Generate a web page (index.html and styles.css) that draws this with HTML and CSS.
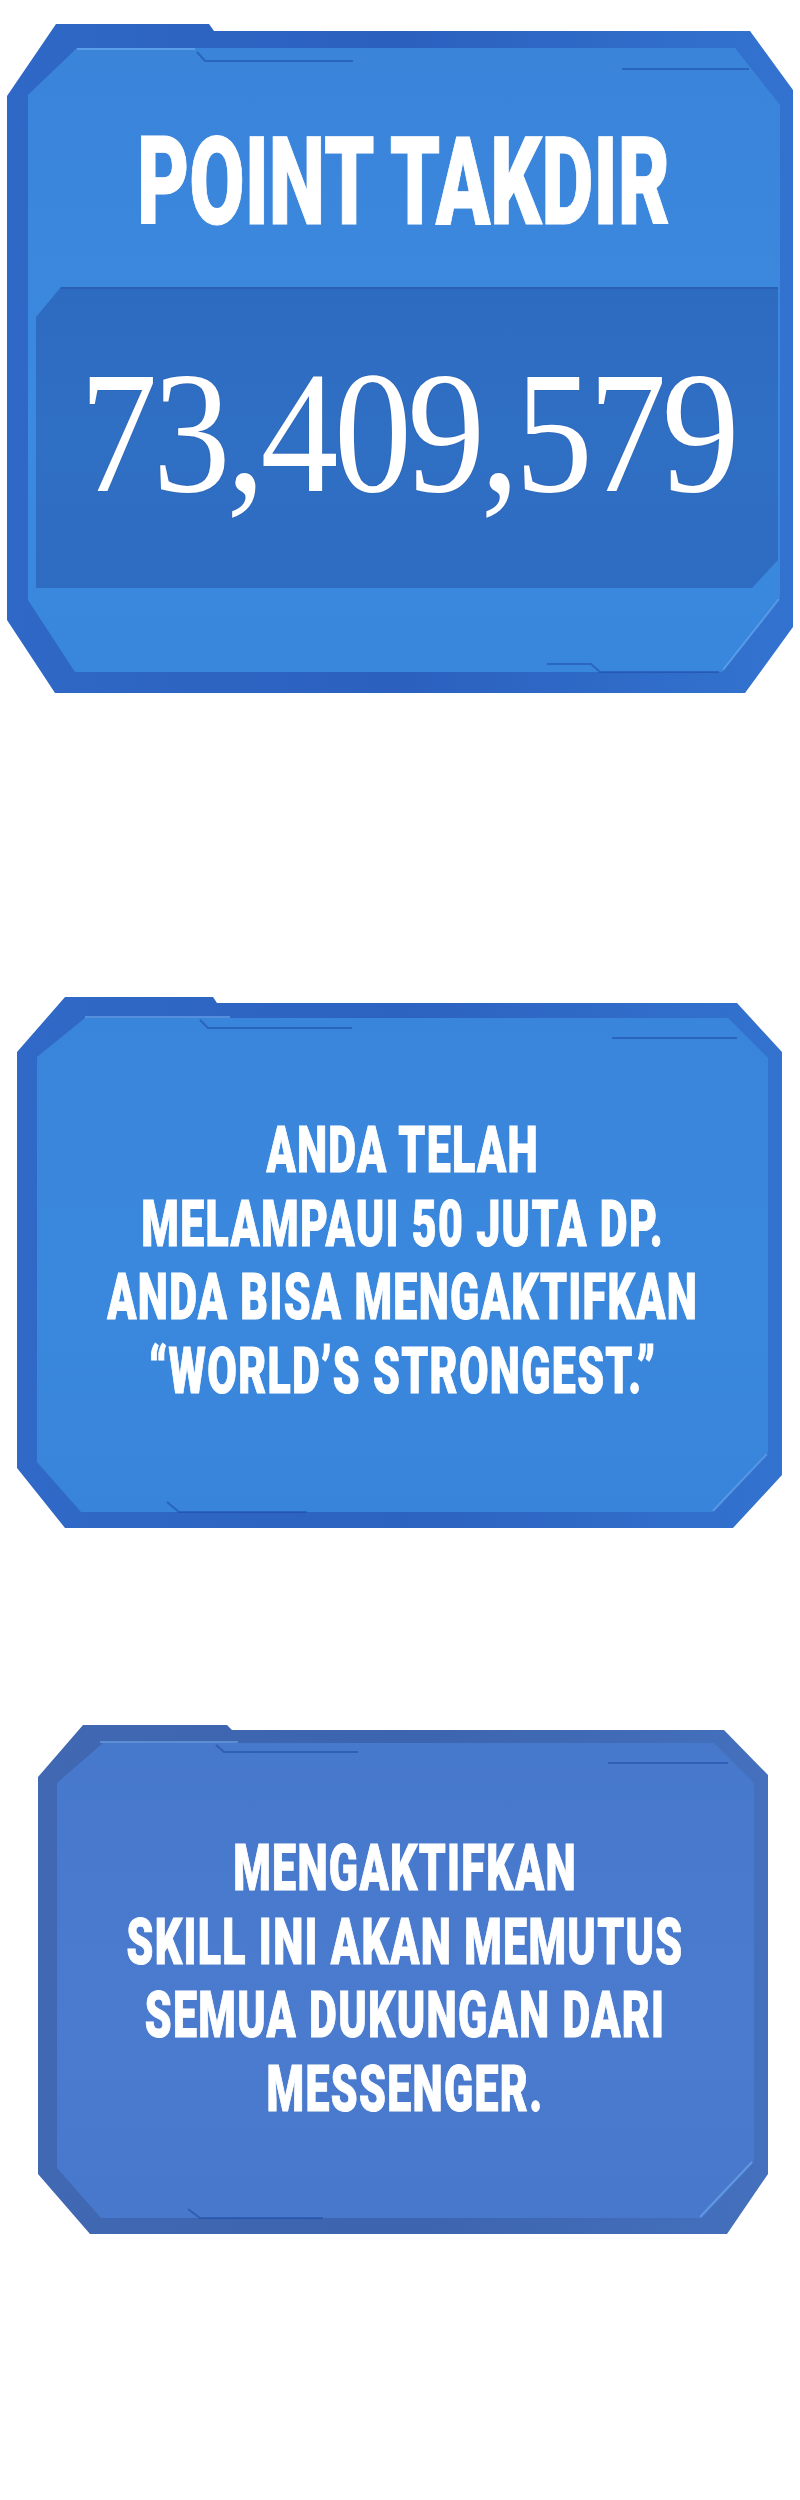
FILE: index.html
```html
<!DOCTYPE html>
<html>
  <head>
    <title>Point Takdir</title>

    <link rel="stylesheet" href="styles.css">
  </head>
  <body>
    <div class="strip">
      <div class="panel panel-points">
        <div class="panel-face face-points">
          <p class="points-title">POINT TAKDIR</p>
          <div class="points-box">
            <p class="points-value">73,409,579</p>
          </div>
        </div>
        <svg class="panel-trim" viewBox="0 0 786 669" preserveAspectRatio="none">
          <polyline class="trim-light" points="70,25 188,25"/>
          <polyline class="trim-dark" points="190,28 198,37 346,37"/>
          <polyline class="trim-dark" points="615,45 742,45"/>
          <polyline class="trim-dark" points="540,640 584,640 593,648 712,648"/>
          <polyline class="trim-light" points="772,575 716,646"/>
        </svg>
      </div>

      <div class="panel panel-notice">
        <div class="panel-face face-notice">
          <p class="message">
            ANDA TELAH<br>
            MELAMPAUI 50 JUTA DP.<br>
            ANDA BISA MENGAKTIFKAN<br>
            “WORLD’S STRONGEST.”
          </p>
        </div>
        <svg class="panel-trim" viewBox="0 0 765 531" preserveAspectRatio="none">
          <polyline class="trim-light" points="68,20 213,20"/>
          <polyline class="trim-dark" points="183,23 191,31 335,31"/>
          <polyline class="trim-dark" points="595,41 720,41"/>
          <polyline class="trim-dark" points="150,505 162,515 290,515"/>
          <polyline class="trim-light" points="750,457 696,514"/>
        </svg>
      </div>

      <div class="panel panel-warning">
        <div class="panel-face face-warning">
          <p class="message message-warning">
            MENGAKTIFKAN<br>
            SKILL INI AKAN MEMUTUS<br>
            SEMUA DUKUNGAN DARI<br>
            MESSENGER.
          </p>
        </div>
        <svg class="panel-trim" viewBox="0 0 730 509" preserveAspectRatio="none">
          <polyline class="trim-light" points="62,17 200,17"/>
          <polyline class="trim-dark" points="178,20 186,27 320,27"/>
          <polyline class="trim-dark" points="570,38 690,38"/>
          <polyline class="trim-dark" points="150,484 162,493 285,493"/>
          <polyline class="trim-light" points="714,437 662,492"/>
        </svg>
      </div>
    </div>
  </body>
</html>
```

FILE: styles.css
```css
body {
  margin: 0;
  background-color: white;
  font-family: Roboto, "Liberation Sans", sans-serif;
}

.strip {
  display: flex;
  flex-direction: column;
  align-items: flex-start;
  padding-bottom: 266px;
}

.panel {
  position: relative;
  display: flex;
  box-sizing: border-box;
}

.panel-face {
  flex: 1;
  min-width: 0;
  display: flex;
  flex-direction: column;
  align-items: center;
}

.panel-trim {
  position: absolute;
  top: 0;
  left: 0;
  width: 100%;
  height: 100%;
  pointer-events: none;
}

.trim-light {
  fill: none;
  stroke: rgba(130, 190, 250, 0.45);
  stroke-width: 2;
}

.trim-dark {
  fill: none;
  stroke: rgba(25, 70, 160, 0.5);
  stroke-width: 2;
}

/* panel 1 */

.panel-points {
  margin: 24px 0 0 7px;
  width: 786px;
  height: 669px;
  padding: 24px 13px 21px 21px;
  background: linear-gradient(90deg, #2f68c6, #2b60bf 50%, #3373cf);
  clip-path: polygon(0 72px, 49px 0, 202px 0, 207px 7px, calc(100% - 43px) 7px, 100% 66px,
    100% calc(100% - 66px), calc(100% - 48px) 100%, 48px 100%, 0 calc(100% - 73px));
}

.face-points {
  background: linear-gradient(180deg, #3a84da, #3b8adf 60%, #3987dd);
  clip-path: polygon(0 47px, 49px 0, calc(100% - 45px) 0, 100% 57px,
    100% calc(100% - 75px), calc(100% - 58px) 100%, 47px 100%, 0 calc(100% - 72px));
}

.points-title {
  margin: 74px 0 0;
  font-size: 122px;
  line-height: 1;
  font-weight: 900;
  color: white;
  white-space: nowrap;
  -webkit-text-stroke: 1px white;
  transform: scaleX(0.657);
}

.points-box {
  align-self: stretch;
  display: flex;
  justify-content: center;
  box-sizing: border-box;
  height: 301px;
  margin: 43px 2px 0 8px;
  padding-top: 57px;
  background: linear-gradient(180deg, #2d6bc0, #2f6fc4 50%, #2e6cc1);
  border-top: 2px solid #2a5fb4;
  clip-path: polygon(0 30px, 25px 0, 100% 0, 100% calc(100% - 28px), calc(100% - 26px) 100%, 0 100%);
}

.points-value {
  margin: 0;
  font-family: "Liberation Serif", serif;
  font-size: 173px;
  line-height: 1;
  letter-spacing: -5px;
  color: white;
  white-space: nowrap;
  text-shadow: 0 0 1px rgba(20, 50, 120, 0.5);
  transform: scaleX(0.9);
}

/* panel 2 */

.panel-notice {
  margin: 304px 0 0 17px;
  width: 765px;
  height: 531px;
  padding: 21px 14px 16px 20px;
  background: linear-gradient(90deg, #3069c7, #2c62c0 50%, #3372cf);
  clip-path: polygon(0 55px, 48px 0, 196px 0, 200px 6px, calc(100% - 45px) 6px, 100% 55px,
    100% calc(100% - 53px), calc(100% - 49px) 100%, 48px 100%, 0 calc(100% - 60px));
}

.face-notice {
  background: linear-gradient(180deg, #3985db, #3a88dd 60%, #3884da);
  clip-path: polygon(0 39px, 48px 0, calc(100% - 40px) 0, 100% 40px,
    100% calc(100% - 60px), calc(100% - 56px) 100%, 44px 100%, 0 calc(100% - 50px));
}

.message {
  margin: 96px 0 0;
  font-size: 65px;
  line-height: 73.5px;
  font-weight: 900;
  letter-spacing: 2px;
  text-align: center;
  color: white;
  white-space: nowrap;
  -webkit-text-stroke: 1px white;
  transform: scaleX(0.66);
}

/* panel 3 */

.panel-warning {
  margin: 197px 0 0 38px;
  width: 730px;
  height: 509px;
  padding: 18px 14px 16px 19px;
  background: linear-gradient(90deg, #4068b3, #3d64ae 50%, #4470bd);
  clip-path: polygon(0 52px, 45px 0, 189px 0, 194px 5px, calc(100% - 44px) 5px, 100% 50px,
    100% calc(100% - 60px), calc(100% - 41px) 100%, 52px 100%, 0 calc(100% - 60px));
}

.face-warning {
  background: linear-gradient(180deg, #4678cc, #4a7bcf 60%, #4778cc);
  clip-path: polygon(0 40px, 46px 0, calc(100% - 40px) 0, 100% 40px,
    100% calc(100% - 56px), calc(100% - 52px) 100%, 44px 100%, 0 calc(100% - 50px));
}

.message-warning {
  margin-top: 89px;
}
```
